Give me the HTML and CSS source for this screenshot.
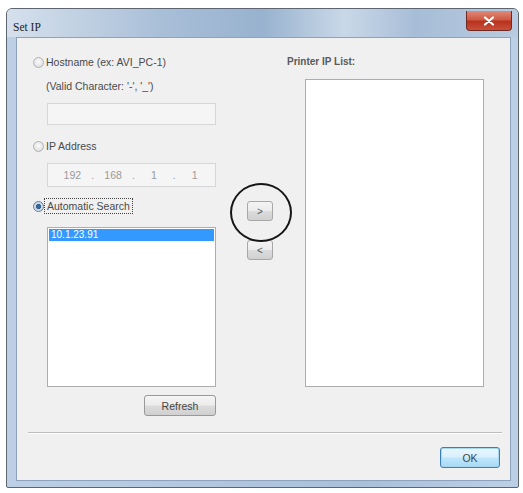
FILE: index.html
```html
<!DOCTYPE html>
<html>
<head>
<meta charset="utf-8">
<link rel="stylesheet" href="styles.css">
</head>
<body>
<div class="window">
  <div class="titlebar">
    <span class="title">Set IP</span>
    <span class="close"><svg width="12" height="10" viewBox="0 0 12 10"><path d="M2 1.5 L10 8.5 M10 1.5 L2 8.5" stroke="#fff" stroke-width="2.2" stroke-linecap="round"/></svg></span>
  </div>
  <div class="client">
    <div class="columns">
      <div class="left">
        <div class="opt"><span class="radio"></span><span>Hostname (ex: AVI_PC-1)</span></div>
        <div class="hint">(Valid Character: '-', '_')</div>
        <div class="field host"></div>
        <div class="opt gap13"><span class="radio"></span><span>IP Address</span></div>
        <div class="field ip"><span>192</span><i>.</i><span>168</span><i>.</i><span>1</span><i>.</i><span>1</span></div>
        <div class="opt gap11"><span class="radio on"></span><span class="focus">Automatic Search</span></div>
        <div class="listbox left-list"><div class="sel">10.1.23.91</div></div>
        <button class="btn refresh">Refresh</button>
      </div>
      <div class="mid">
        <div class="marked"><button class="btn arrow">&gt;</button><span class="ring"></span></div>
        <button class="btn arrow">&lt;</button>
      </div>
      <div class="right">
        <div class="label">Printer IP List:</div>
        <div class="listbox right-list"></div>
      </div>
    </div>
    <div class="sep"></div>
    <div class="footer"><button class="btn ok">OK</button></div>
  </div>
</div>
</body>
</html>
```

FILE: styles.css
```css
html, body { margin: 0; padding: 0; background: #fff; }
body { width: 523px; height: 493px; overflow: hidden; font-family: "Liberation Sans", Arial, sans-serif; font-size: 10.5px; color: #4a4a4a; }
.window {
  margin: 8px 0 0 6px;
  width: 513px;
  height: 480px;
  box-sizing: border-box;
  border: 1px solid #5d6670;
  border-radius: 6px 6px 2px 2px;
  background: linear-gradient(90deg, #bccfe4 0%, #b2c7de 40%, #aac0da 70%, #bcd0e5 100%);
  padding: 0 7px 6px 9px;
  display: flex;
  flex-direction: column;
}
.titlebar {
  height: 28px;
  display: flex;
  justify-content: space-between;
  align-items: flex-start;
  background: linear-gradient(90deg, #d5e0ec 0%, #c4d3e4 12%, #a9bfd8 30%, #98b2cf 50%, #c9d8e8 66%, #a7bdd7 80%, #b8cbe0 100%);
  margin: 0 -7px 0 -9px;
  padding: 0 6px 0 6px;
  border-radius: 5px 5px 0 0;
}
.title { margin-top: 12px; font-family: "Liberation Serif", serif; font-size: 11.5px; color: #1e1e1e; line-height: 12px; }
.close {
  margin-top: 2px;
  width: 46px;
  height: 20px;
  box-sizing: border-box;
  border: 1px solid #6e2a22;
  border-top: none;
  border-radius: 0 0 4px 4px;
  background: linear-gradient(#e08a78 0%, #cf5a45 45%, #b8321d 55%, #c8503a 100%);
  display: flex; align-items: center; justify-content: center;
}
.client {
  flex: 1;
  background: #f0f0f0;
  border: 1px solid #8da3bd;
  box-sizing: border-box;
  padding: 16px 9px 0 16px;
  display: flex;
  flex-direction: column;
}
.columns { display: flex; }
.left { width: 184px; display: flex; flex-direction: column; }
.opt { height: 16px; display: flex; align-items: center; }
.gap13 { margin-top: 13px; }
.gap11 { margin-top: 11px; }
.radio {
  width: 11px; height: 11px; border-radius: 50%;
  border: 1px solid #b0b3b7;
  background: radial-gradient(circle at 50% 40%, #fafafa 0%, #e2e2e2 70%, #cfcfcf 100%);
  flex: none;
  box-sizing: border-box;
}
.radio.on { background: radial-gradient(circle, #2d6fb0 0%, #3a5f8a 35%, #c7d5e5 45%, #e8e8e8 100%); border-color: #5b7fa3; }
.opt span:last-child { padding-left: 2px; }
.focus { outline: 1px dotted #444; outline-offset: 0; padding: 1px 2px 1px 2px !important; margin-left: 1px; }
.hint { height: 16px; line-height: 16px; margin-top: 8px; margin-left: 13px; }
.field {
  margin-left: 14px; width: 169px; box-sizing: border-box;
  border: 1px solid #d6d6d6; background: #f5f5f5;
}
.host { height: 22px; margin-top: 9px; }
.ip { height: 24px; margin-top: 9px; display: flex; align-items: center; padding-left: 4px; color: #9a9a9a; }
.ip span { width: 41px; text-align: center; }
.ip i { font-style: normal; width: 0; display: flex; justify-content: center; }
.listbox { background: #fff; border: 1px solid #adadad; box-sizing: border-box; }
.left-list { margin-left: 14px; width: 169px; height: 160px; margin-top: 13px; padding: 1px; }
.sel { background: #3399ff; color: #fff; height: 12px; line-height: 12px; padding-left: 2px; font-size: 10px; }
.btn {
  font-family: "Liberation Sans", Arial, sans-serif; font-size: 10.5px; color: #444;
  border: 1px solid #999; border-radius: 3px;
  background: linear-gradient(#f4f4f4 0%, #ececec 48%, #dcdcdc 52%, #d0d0d0 100%);
  padding: 0; box-sizing: border-box;
}
.refresh { width: 72px; height: 21px; margin-top: 8px; align-self: flex-end; margin-right: 1px; }
.mid { width: 26px; margin-left: 30px; padding-top: 147px; display: flex; flex-direction: column; }
.marked { position: relative; height: 20px; }
.arrow { width: 26px; height: 20px; font-size: 10px; color: #555; border-color: #a8a8a8; }
.mid > .arrow { margin-top: 19px; }
.ring {
  position: absolute; left: -17px; top: -18px; width: 62px; height: 59px;
  border: 2px solid #161616; border-radius: 50%; box-sizing: border-box;
  pointer-events: none;
}
.right { margin-left: 14px; display: flex; flex-direction: column; }
.label { height: 16px; line-height: 16px; font-weight: bold; color: #5a5a5a; font-size: 10px; }
.right-list { margin-left: 18px; margin-top: 9px; width: 179px; height: 308px; }
.sep { margin: 16px 0 0 -5px; width: 474px; height: 0; border-top: 1px solid #bdbdbd; border-bottom: 1px solid #fff; }
.footer { display: flex; justify-content: flex-end; margin-top: 13px; }
.ok {
  width: 60px; height: 21px; border: 1px solid #3c7fb1; margin-right: 1px;
  background: linear-gradient(#eaf6fd 0%, #d9f0fc 48%, #bee6fd 52%, #a7d9f5 100%);
  box-shadow: inset 0 0 0 1px #a8d8f0;
}
```
